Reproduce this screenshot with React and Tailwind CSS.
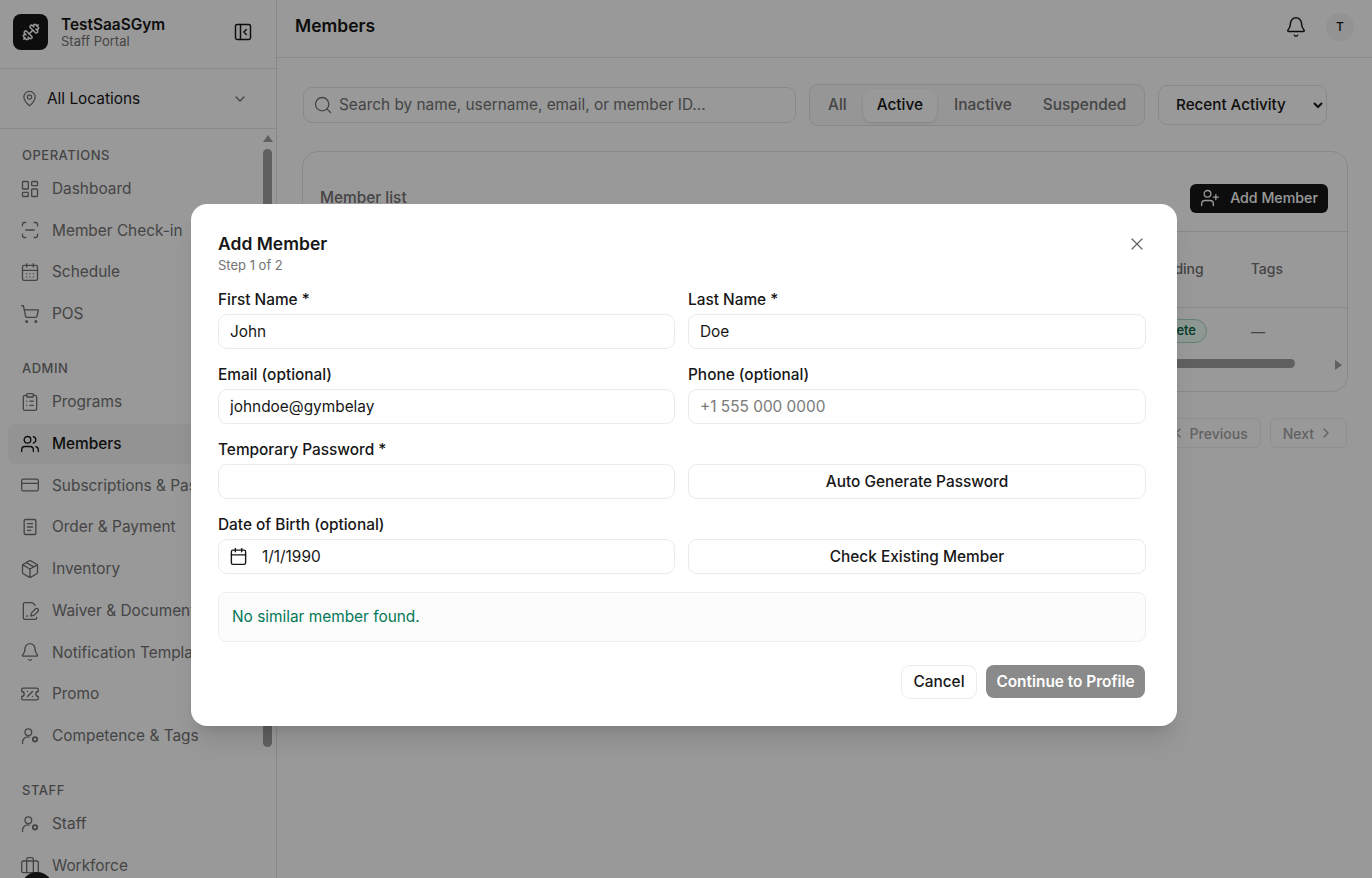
import {
  Bell, Briefcase, Calendar, CalendarDays, ChevronDown, ChevronLeft, ChevronRight, ClipboardList, CreditCard,
  Dumbbell, FileSignature, LayoutDashboard, MapPin, Package, PanelLeftClose, ScanLine, Search,
  ShoppingCart, TicketPercent, UserPlus, Users, X,
} from 'lucide-react'

function OrderIcon({ className, strokeWidth }) {
  return (
    <svg className={className} viewBox="0 0 24 24" fill="none" stroke="currentColor" strokeWidth={strokeWidth} strokeLinecap="round" strokeLinejoin="round">
      <rect x="5" y="3" width="14" height="18" rx="1.5" />
      <path d="M9 8h6M9 12h6M9 16h4" />
    </svg>
  )
}

function UserRingIcon({ className, strokeWidth }) {
  return (
    <svg className={className} viewBox="0 0 24 24" fill="none" stroke="currentColor" strokeWidth={strokeWidth} strokeLinecap="round" strokeLinejoin="round">
      <circle cx="10" cy="7.5" r="4" />
      <path d="M3 21v-1.5a6.5 6.5 0 0 1 6.5-6.5H11" />
      <circle cx="18" cy="16" r="2.6" strokeWidth={2.2} />
    </svg>
  )
}

const sections = [
  {
    label: 'OPERATIONS',
    items: [
      { name: 'Dashboard', icon: LayoutDashboard },
      { name: 'Member Check-in', icon: ScanLine },
      { name: 'Schedule', icon: CalendarDays },
      { name: 'POS', icon: ShoppingCart },
    ],
  },
  {
    label: 'ADMIN',
    items: [
      { name: 'Programs', icon: ClipboardList },
      { name: 'Members', icon: Users, active: true },
      { name: 'Subscriptions & Passes', icon: CreditCard },
      { name: 'Order & Payment', icon: OrderIcon },
      { name: 'Inventory', icon: Package },
      { name: 'Waiver & Documents', icon: FileSignature },
      { name: 'Notification Templates', icon: Bell },
      { name: 'Promo', icon: TicketPercent },
      { name: 'Competence & Tags', icon: UserRingIcon },
    ],
  },
  {
    label: 'STAFF',
    items: [
      { name: 'Staff', icon: UserRingIcon },
      { name: 'Workforce', icon: Briefcase },
    ],
  },
]

const inputClass = 'h-[35px] w-full rounded-[9px] border border-[#ebebeb] bg-white px-[11px] text-[15.4px] text-[#171717] outline-none placeholder:text-[#7a7a7a]'

function Sidebar() {
  return (
    <aside className="flex h-full w-[277px] shrink-0 flex-col border-r border-[#e5e5e5] bg-white">
      <div className="flex h-[69px] shrink-0 items-center border-b border-[#e5e5e5] pb-[4px] pl-[13px] pr-[23px]">
        <div className="flex h-[36px] w-[35px] items-center justify-center rounded-lg bg-[#171717] text-white">
          <Dumbbell className="h-[18px] w-[18px]" />
        </div>
        <div className="ml-[13px] flex-1">
          <p className="text-[15.4px] font-semibold leading-[18px] text-[#171717]">TestSaaSGym</p>
          <p className="text-[13px] leading-[15px] text-[#737373]">Staff Portal</p>
        </div>
        <PanelLeftClose className="h-[20px] w-[20px] text-[#171717]" strokeWidth={1.75} />
      </div>
      <div className="flex h-[60px] shrink-0 items-center border-b border-[#e5e5e5] pl-[21px] pr-[28px]">
        <MapPin className="h-[17px] w-[17px] text-[#737373]" strokeWidth={1.75} />
        <span className="ml-[9px] flex-1 text-[15.4px] text-[#171717]">All Locations</span>
        <ChevronDown className="h-[16px] w-[16px] text-[#737373]" />
      </div>
      <div className="flex min-h-0 flex-1">
        <nav className="min-w-0 flex-1 overflow-hidden pl-[8px] pt-[16.5px]">
          {sections.map((s) => (
            <div key={s.label} className="mb-[25px]">
              <p className="mb-[4px] h-[19px] pl-[14px] text-[13px] font-medium leading-[18px] tracking-[0.5px] text-[#737373]">{s.label}</p>
              {s.items.map((item) => (
                <div key={item.name} className={`mb-[1.75px] flex h-[40px] items-center whitespace-nowrap rounded-lg pl-[12px] text-[15.4px] ${item.active ? 'bg-[#f5f5f5] font-medium text-[#171717]' : 'text-[#737373]'}`}>
                  <item.icon className="mr-[12px] h-[20px] w-[20px] shrink-0" strokeWidth={1.6} />
                  {item.name}
                </div>
              ))}
            </div>
          ))}
        </nav>
        <div className="mr-[1px] flex w-[15px] shrink-0 flex-col items-center pt-[6px]">
          <div className="h-0 w-0 border-x-[5px] border-b-[7px] border-x-transparent border-b-[#a0a0a0]" />
          <div className="mt-[7px] h-[598px] w-[9px] rounded-full bg-[#a0a0a0]" />
        </div>
      </div>
    </aside>
  )
}

function Main() {
  return (
    <main className="flex h-full min-w-0 flex-1 flex-col bg-white">
      <header className="flex h-[58px] shrink-0 items-center border-b border-[#e5e5e5] pb-[4px] pl-[18px] pr-[18px]">
        <h1 className="flex-1 text-[17.5px] font-semibold text-[#171717]">Members</h1>
        <Bell className="h-[22px] w-[22px] text-[#171717]" strokeWidth={1.6} />
        <div className="ml-[19px] flex h-[28px] w-[28px] items-center justify-center rounded-full bg-[#f5f5f5] text-[12px] font-medium text-[#171717]">T</div>
      </header>
      <div className="pl-[25px] pr-[24px] pt-[26px]">
        <div className="flex items-center pr-[21px]">
          <div className="ml-[1px] flex h-[36px] w-[493px] items-center rounded-[9px] border border-[#e5e5e5] pl-[9px] text-[15.4px] text-[#737373]">
            <Search className="mr-[6px] h-[20px] w-[20px]" strokeWidth={1.6} />
            Search by name, username, email, or member ID...
          </div>
          <div className="ml-[13px] flex h-[42px] w-[336px] items-center gap-[2px] rounded-[9px] border border-[#e5e5e5] bg-[#fafafa] px-[4px] text-[15.4px] font-[450] text-[#737373]">
            <span className="px-[14px]">All</span>
            <span className="flex h-[33px] items-center rounded-lg bg-white px-[14px] text-[#171717] shadow-sm">Active</span>
            <span className="pl-[15px] pr-[14px]">Inactive</span>
            <span className="px-[15px]">Suspended</span>
          </div>
          <select className="ml-[13px] h-[40px] w-[169px] rounded-[9px] border border-[#e5e5e5] bg-white pb-[2px] pl-[13px] text-[15.2px] font-[450] text-[#171717]">
            <option>Recent Activity</option>
          </select>
        </div>
        <section className="mt-[25px] h-[241px] rounded-2xl border border-[#e5e5e5]">
          <div className="flex h-[80px] items-center justify-between border-b border-[#e5e5e5] pl-[17px] pr-[19px] pt-[13px]">
            <h2 className="text-[15.4px] font-medium text-[#737373]">Member list</h2>
            <button className="flex h-[29px] w-[138px] items-center justify-center gap-[10px] rounded-md bg-[#171717] text-[14.2px] font-medium text-white">
              <UserPlus className="h-[20px] w-[20px]" strokeWidth={1.6} /> Add Member
            </button>
          </div>
          <div className="flex h-[76px] items-center justify-end border-b border-[#e5e5e5] pb-[2px] pr-[64px] text-[14px] font-medium text-[#737373]">
            <span className="mr-[47px]">Onboarding</span>
            <span>Tags</span>
          </div>
          <div className="flex h-[48px] items-center justify-end pb-[2px] pr-[82px] text-[13px] font-medium">
            <span className="mr-[44px] rounded-full border border-[#a7d8c4] bg-[#ecfdf5] px-[10px] py-[1px] text-[#065f46]">Incomplete</span>
            <span className="text-[14px] text-[#737373]">—</span>
          </div>
          <div className="flex h-[14px] items-center justify-end pr-[5px]">
            <div className="mr-[40px] h-[9px] w-[400px] rounded-full bg-[#a0a0a0]" />
            <div className="mt-[3px] h-0 w-0 border-y-[5px] border-l-[7px] border-y-transparent border-l-[#a0a0a0]" />
          </div>
        </section>
        <div className="mt-[26px] flex justify-end gap-[9px] pr-[1px] text-[14px] font-medium text-[#a3a3a3]">
          <span className="flex h-[30px] items-center gap-[4px] rounded-md border border-[#eeeeee] px-[12px]"><ChevronLeft className="h-[16px] w-[16px]" />Previous</span>
          <span className="flex h-[30px] items-center gap-[4px] rounded-md border border-[#eeeeee] px-[12px]">Next<ChevronRight className="h-[16px] w-[16px]" /></span>
        </div>
      </div>
    </main>
  )
}

function Field({ label, children }) {
  return (
    <div>
      <label className="mb-[4px] block pt-[1px] text-[15.4px] font-[450] leading-[20px] text-[#171717]">{label}</label>
      {children}
    </div>
  )
}

function OutlineButton({ children }) {
  return (
    <button className="h-[35px] w-full self-end rounded-[9px] border border-[#ebebeb] bg-white text-[15.4px] font-medium text-[#171717]">{children}</button>
  )
}

function AddMemberModal() {
  return (
    <div className="absolute inset-0 bg-black/40">
      <div className="absolute left-[191px] top-[204px] h-[522px] w-[986px] rounded-2xl bg-white pl-[27px] pr-[31px] pt-[29px] shadow-xl">
        <h2 className="text-[17.5px] font-semibold leading-[22px] text-[#171717]">Add Member</h2>
        <p className="mt-[1px] text-[13px] leading-[18px] text-[#737373]">Step 1 of 2</p>
        <X className="absolute right-[30px] top-[30px] h-[20px] w-[20px] text-[#666666]" strokeWidth={1.5} />
        <div className="mt-[15px] grid grid-cols-[457px_1fr] gap-x-[13px] gap-y-[15px]">
          <Field label="First Name *"><input className={inputClass} defaultValue="John" /></Field>
          <Field label="Last Name *"><input className={inputClass} defaultValue="Doe" /></Field>
          <Field label="Email (optional)"><input className={inputClass} defaultValue="johndoe@gymbelay" /></Field>
          <Field label="Phone (optional)"><input className={inputClass} placeholder="+1 555 000 0000" /></Field>
          <Field label="Temporary Password *"><input className={inputClass} /></Field>
          <OutlineButton>Auto Generate Password</OutlineButton>
          <Field label="Date of Birth (optional)">
            <div className="flex h-[35px] items-center rounded-[9px] border border-[#ebebeb] pl-[10px] text-[15.4px] text-[#171717]">
              <Calendar className="mr-[14px] h-[19px] w-[19px]" strokeWidth={1.75} />
              1/1/1990
            </div>
          </Field>
          <OutlineButton>Check Existing Member</OutlineButton>
        </div>
        <div className="mt-[18px] flex h-[50px] items-center rounded-lg border border-[#eeeeee] bg-[#fcfcfc] pl-[13px] text-[15.4px] text-[#047857]">No similar member found.</div>
        <div className="mt-[23px] flex justify-end gap-[9px] pr-[1px]">
          <button className="h-[34px] w-[76px] rounded-[9px] border border-[#ececec] bg-white text-[15.4px] font-[450] text-[#171717]">Cancel</button>
          <button className="h-[33px] w-[159px] rounded-lg bg-[#8a8a8a] text-[15.4px] font-semibold text-white">Continue to Profile</button>
        </div>
      </div>
    </div>
  )
}

export default function App() {
  return (
    <div className="relative flex h-screen w-full overflow-hidden bg-white font-['Inter',sans-serif]">
      <Sidebar />
      <Main />
      <AddMemberModal />
      <div className="absolute left-[21px] top-[872px] h-[32px] w-[32px] rounded-full bg-[#111111]" />
    </div>
  )
}
